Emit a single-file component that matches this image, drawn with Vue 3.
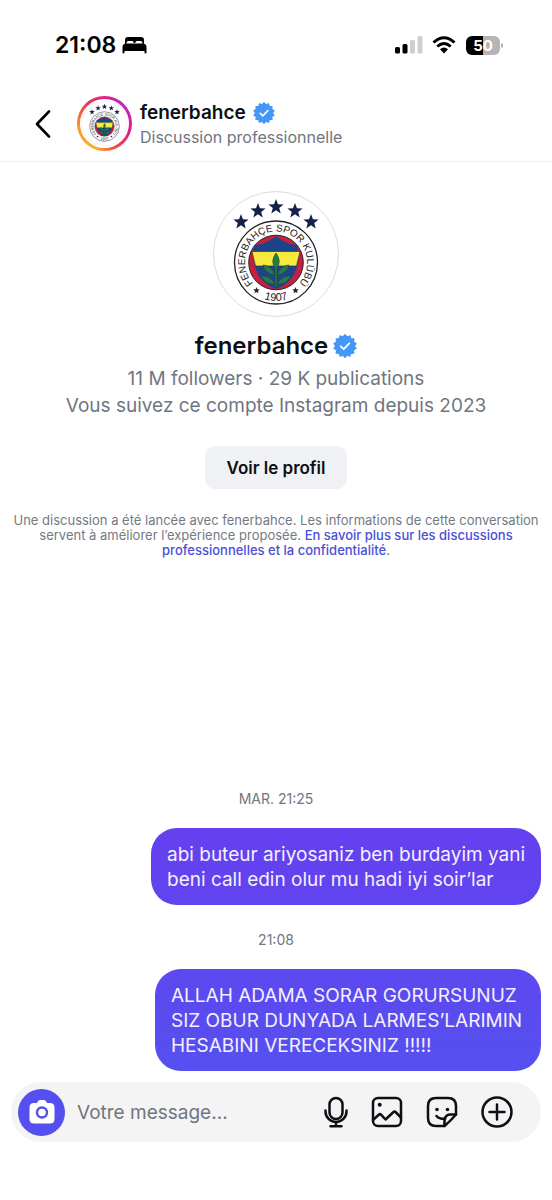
<template>
  <div class="chat">
    <div class="status-bar">
      <span class="time">21:08</span>
      <svg class="bed" viewBox="0 0 25 18">
        <path d="M3 8V4Q3 1 6 1H19Q22 1 22 4V8H20.5V7Q20.5 5 18.5 5H15Q13.300 5 13.300 7H11.700Q11.700 5 10 5H6.500Q4.500 5 4.500 7V8Z" />
        <path d="M3.500 7.500H21.500Q24.500 8 24.500 11V16.500Q24.500 17.500 23.500 17.500T22.500 16.500V15H2.500V16.500Q2.500 17.500 1.500 17.500T.5 16.500V11Q.5 8 3.500 7.500Z" />
      </svg>
      <svg class="signal" viewBox="0 0 28 18">
        <rect x="0" y="11" width="5" height="6.5" rx="1.5" />
        <rect x="7.5" y="8" width="5" height="9.5" rx="1.5" />
        <rect x="15" y="4" width="5" height="13.5" rx="1.5" fill="#cfcfcf" />
        <rect x="22.5" y="0" width="5" height="17.5" rx="1.5" fill="#cfcfcf" />
      </svg>
      <svg class="wifi" viewBox="0 0 24 18">
        <g fill="none" stroke="#000" stroke-width="3">
          <path d="M1.500 6.500Q12-3 22.500 6.500" />
          <path d="M5.300 10.500Q12 4.500 18.700 10.500" />
        </g>
        <path d="M8 13.200Q12 9.800 16 13.200L12 17.400Z" />
      </svg>
      <span class="battery">50</span>
    </div>

    <header class="top-bar">
      <button class="back" aria-label="Retour">
        <svg viewBox="0 0 16 28">
          <path d="M14 1.500L2 14L14 26.500" fill="none" stroke="#000" stroke-width="2.6" stroke-linecap="round" stroke-linejoin="round" />
        </svg>
      </button>
      <div class="story-ring">
        <div class="story-inner">
          <svg viewBox="0 0 126 126"><use href="#crest" /></svg>
        </div>
      </div>
      <div class="account">
        <div class="account-name">fenerbahce <svg viewBox="0 0 24 24"><use href="#verified" /></svg></div>
        <div class="account-type">Discussion professionnelle</div>
      </div>
    </header>

    <main>
      <section class="profile">
        <svg class="profile-pic" viewBox="0 0 126 126">
          <g id="crest">
            <path id="crest-top" d="M63 102.500 A31 31 0 0 1 63 40.500 A31 31 0 0 1 63 102.500" fill="none" />
            <path id="crest-bottom" d="M24.500 71.500 A38.500 38.500 0 0 0 101.500 71.500" fill="none" />
            <circle cx="63" cy="63" r="62.5" fill="#fff" stroke="#dcdcde" />
            <polygon v-for="(s, i) in stars" :key="i" :points="star(s[0], s[1], 8)" fill="#14204a" />
            <circle cx="63" cy="71.5" r="41.5" fill="#fff" stroke="#23242a" stroke-width="1.3" />
            <circle cx="63" cy="71.5" r="27.3" fill="#c8203c" stroke="#23242a" />
            <path d="M63 45 Q52 54 41 54 Q39 78 48 88 Q54 95 63 98 Q72 95 78 88 Q87 78 85 54 Q74 54 63 45Z" fill="#1d4489" />
            <path d="M39 60.500H87L83.500 75H42.500Z" fill="#f8ea3c" stroke="#23242a" stroke-width=".6" />
            <g fill="#2a7a45" stroke="#16483a" stroke-width=".6">
              <path d="M63 62 Q57 70 62 77 V96 H64 V77 Q69 70 63 62Z" />
              <path d="M62 84 Q58 74 50 74 Q52 83 62 84Z" />
              <path d="M64 84 Q68 74 76 74 Q74 83 64 84Z" />
              <path d="M62 93 Q57 84 48 85 Q53 94 62 93Z" />
              <path d="M64 93 Q69 84 78 85 Q73 94 64 93Z" />
            </g>
            <polygon :points="star(43.5, 99.5, 3.5)" fill="#23242a" />
            <polygon :points="star(82.5, 99.5, 3.5)" fill="#23242a" />
            <g font-family="Liberation Sans, sans-serif" fill="#23242a" text-anchor="middle">
              <text font-size="10"><textPath href="#crest-top" startOffset="50%">FENERBAHÇE SPOR KULÜBÜ</textPath></text>
              <text font-size="11"><textPath href="#crest-bottom" startOffset="50%">1907</textPath></text>
            </g>
          </g>
        </svg>
        <h1>
          fenerbahce
          <svg viewBox="0 0 24 24">
            <g id="verified">
              <polygon :points="badge" fill="#4397f7" stroke="#4397f7" stroke-width="1.4" stroke-linejoin="round" />
              <path d="M7.800 12.300l2.900 2.900 5.600-5.900" fill="none" stroke="#fff" stroke-width="1.8" stroke-linecap="round" stroke-linejoin="round" />
            </g>
          </svg>
        </h1>
        <p class="info">11 M followers · 29 K publications</p>
        <p class="info">Vous suivez ce compte Instagram depuis 2023</p>
        <button class="view-profile">Voir le profil</button>
        <p class="notice">
          Une discussion a été lancée avec fenerbahce. Les informations de cette conversation
          servent à améliorer l’expérience proposée.
          <a href="#">En savoir plus sur les discussions professionnelles et la confidentialité</a>.
        </p>
      </section>

      <section class="messages">
        <template v-for="m in messages" :key="m.time">
          <time>{{ m.time }}</time>
          <p class="bubble" :class="m.tone">{{ m.text }}</p>
        </template>
      </section>
    </main>

    <form class="composer" @submit.prevent>
      <button class="camera" type="button" aria-label="Appareil photo">
        <svg viewBox="0 0 26 26">
          <path d="M8 4Q9 1 11 1H15Q17 1 18 4H21Q25.500 4 25.500 8.500V20Q25.500 24.500 21 24.500H5Q.5 24.500 .5 20V8.500Q.5 4 5 4Z" fill="#fff" />
          <circle cx="13" cy="13.5" r="5" fill="none" stroke="#544fee" stroke-width="2.4" />
        </svg>
      </button>
      <input v-model="draft" type="text" placeholder="Votre message..." aria-label="Votre message" />
      <button class="mic" type="button" aria-label="Message vocal">
        <svg viewBox="0 0 24 32">
          <rect x="5.5" y="2" width="13" height="21" rx="6.5" />
          <path d="M1.500 14.500V15.500A10.500 10.500 0 0 0 22.500 15.500V14.500M12 26V30M6.500 30.300H17.500" />
        </svg>
      </button>
      <button type="button" aria-label="Galerie">
        <svg viewBox="0 0 32 32">
          <rect x="2" y="2" width="28" height="28" rx="5" />
          <path d="M2 24L8 18.500Q9 17.700 10 18.700L14.500 23.500L22.500 16Q23.500 15 24.500 16L30 21.500" />
          <circle cx="8.7" cy="8.7" r="2" class="dot" />
        </svg>
      </button>
      <button type="button" aria-label="Stickers">
        <svg viewBox="0 0 32 32">
          <path d="M18.500 30H10Q2 30 2 22V10Q2 2 10 2H22Q30 2 30 10V18.500Q24.500 25 18.500 30Z" />
          <path d="M18.500 30Q17.500 18.500 24 18.500H30" />
          <path d="M10.500 20Q13.500 23.500 18.500 22.500" />
          <circle cx="11" cy="13.5" r="1.8" class="dot" />
          <circle cx="21.5" cy="13.5" r="1.8" class="dot" />
        </svg>
      </button>
      <button type="button" aria-label="Plus">
        <svg viewBox="0 0 32 32">
          <circle cx="16" cy="16" r="14.5" />
          <path d="M16 8.500V23.500M8.500 16H23.500" />
        </svg>
      </button>
    </form>
  </div>
</template>

<script setup>
import { ref } from 'vue';

const draft = ref('');

const messages = [
  {
    time: 'MAR. 21:25',
    tone: 'violet',
    text: 'abi buteur ariyosaniz ben burdayim yani beni call edin olur mu hadi iyi soir’lar',
  },
  {
    time: '21:08',
    tone: 'indigo',
    text: 'ALLAH ADAMA SORAR GORURSUNUZ SIZ OBUR DUNYADA LARMES’LARIMIN HESABINI VERECEKSINIZ !!!!!',
  },
];

const stars = [[28, 31], [45, 20], [63, 16], [82, 20], [98, 31]];

// alternates between an outer and an inner radius
const spikes = (cx, cy, outer, inner, count) =>
  Array.from({ length: count * 2 }, (_, i) => {
    const r = i % 2 ? inner : outer;
    const a = (Math.PI * i) / count - Math.PI / 2;
    return `${(cx + r * Math.cos(a)).toFixed(2)},${(cy + r * Math.sin(a)).toFixed(2)}`;
  }).join(' ');

const star = (cx, cy, r) => spikes(cx, cy, r, r * 0.42, 5);
const badge = spikes(12, 12, 11.2, 9.2, 14);
</script>

<style>
body {
  margin: 0;
  background: #fff;
}
</style>

<style scoped>
.chat {
  min-height: 100vh;
  display: flex;
  flex-direction: column;
  box-sizing: border-box;
  padding-bottom: 58px;
  font-family: Inter, "Liberation Sans", sans-serif;
  color: #0c1014;
}

button {
  border: none;
  background: none;
  padding: 0;
  font-family: inherit;
  color: inherit;
  cursor: pointer;
}

svg {
  display: block;
  flex: none;
}

p,
h1 {
  margin: 0;
}

.status-bar {
  height: 90px;
  box-sizing: border-box;
  display: flex;
  align-items: center;
  padding: 0 52px 0 55px;
}

.time {
  font-size: 23px;
  font-weight: 600;
  color: #000;
}

.bed {
  width: 25px;
  height: 18px;
  margin-left: 6px;
}

.signal {
  width: 28px;
  height: 18px;
  margin-left: auto;
}

.wifi {
  width: 24px;
  height: 18px;
  margin: 0 10px 0 9px;
}

.battery {
  position: relative;
  width: 34px;
  height: 19px;
  border-radius: 6px;
  background: linear-gradient(to right, #000 50%, #b5b5b5 50%);
  color: #fff;
  font-size: 15px;
  font-weight: 700;
  line-height: 19px;
  text-align: center;
}

.battery::after {
  content: "";
  position: absolute;
  right: -3px;
  top: 7px;
  width: 2px;
  height: 5px;
  border-radius: 0 2px 2px 0;
  background: #b5b5b5;
}

.top-bar {
  height: 72px;
  box-sizing: border-box;
  display: flex;
  align-items: center;
  padding: 0 35px 4px;
  border-bottom: 1px solid #efeff1;
}

.back svg {
  width: 16px;
  height: 28px;
}

.story-ring {
  margin: 0 8px 0 26px;
  padding: 3px;
  border-radius: 50%;
  background: conic-gradient(#e0218a, #c820c8 12%, #d8208a 30%, #f0503c 44%, #fbb034 56%, #f89a2c 72%, #ee3a50 88%, #e0218a);
}

.story-inner {
  padding: 2px;
  border-radius: 50%;
  background: #fff;
}

.story-inner svg {
  width: 45px;
  height: 45px;
}

.account {
  padding-top: 2px;
}

.account-name {
  display: flex;
  align-items: center;
  gap: 7px;
  font-size: 19px;
  font-weight: 600;
  line-height: 24px;
}

.account-name svg {
  width: 22px;
  height: 22px;
}

.account-type {
  font-size: 16px;
  line-height: 24px;
  color: #6f7680;
}

main {
  flex: 1;
  display: flex;
  flex-direction: column;
}

.profile {
  display: flex;
  flex-direction: column;
  align-items: center;
  padding: 29px 12px 40px;
  text-align: center;
}

.profile-pic {
  width: 126px;
  height: 126px;
}

h1 {
  display: flex;
  align-items: center;
  gap: 5px;
  margin: 14px 0 4px;
  font-size: 24px;
  font-weight: 600;
  line-height: 30px;
}

h1 svg {
  width: 24px;
  height: 24px;
}

.info {
  font-size: 19px;
  line-height: 27px;
  color: #6f7680;
}

.view-profile {
  margin: 27px 0 24px;
  padding: 0 22px;
  height: 43px;
  border-radius: 10px;
  background: #f0f1f5;
  font-size: 17px;
  font-weight: 600;
}

.notice {
  font-size: 13px;
  line-height: 15px;
  color: #737a83;
}

.notice a {
  color: #4a4fd6;
  font-weight: 500;
  text-decoration: none;
}

.messages {
  display: flex;
  flex-direction: column;
  margin-top: auto;
  padding: 0 11px 11px;
}

time {
  text-align: center;
  font-size: 14px;
  line-height: 20px;
  color: #6f7680;
}

.bubble {
  align-self: flex-end;
  box-sizing: border-box;
  max-width: 390px;
  margin: 19px 0 25px;
  padding: 14px 15px 13px 16px;
  border-radius: 26px;
  color: #f3f0ff;
  font-size: 19px;
  line-height: 25px;
}

.bubble:last-child {
  margin-bottom: 0;
}

.violet {
  background: linear-gradient(#6540ee, #6044ef);
}

.indigo {
  max-width: 386px;
  background: linear-gradient(#5d48ef, #5650ef);
}

.composer {
  display: flex;
  align-items: center;
  gap: 23px;
  height: 60px;
  box-sizing: border-box;
  margin: 0 11px;
  padding: 0 28px 0 7px;
  border-radius: 30px;
  background: #f4f4f5;
}

.camera {
  flex: none;
  width: 47px;
  height: 47px;
  display: grid;
  place-items: center;
  border-radius: 50%;
  background: #544fee;
}

.camera svg {
  width: 26px;
  height: 26px;
}

.composer input {
  flex: 1;
  min-width: 0;
  margin-left: -11px;
  padding: 0;
  border: none;
  outline: none;
  background: none;
  font-family: inherit;
  font-size: 19px;
  color: #0c1014;
}

.composer input::placeholder {
  color: #6f7680;
  opacity: 1;
}

.composer > button:not(.camera) svg {
  width: 32px;
  height: 32px;
  fill: none;
  stroke: #0c1014;
  stroke-width: 2.5;
  stroke-linecap: round;
  stroke-linejoin: round;
}

.composer > .mic:not(.camera) svg {
  width: 24px;
}

.composer .dot {
  fill: #0c1014;
  stroke: none;
}
</style>
